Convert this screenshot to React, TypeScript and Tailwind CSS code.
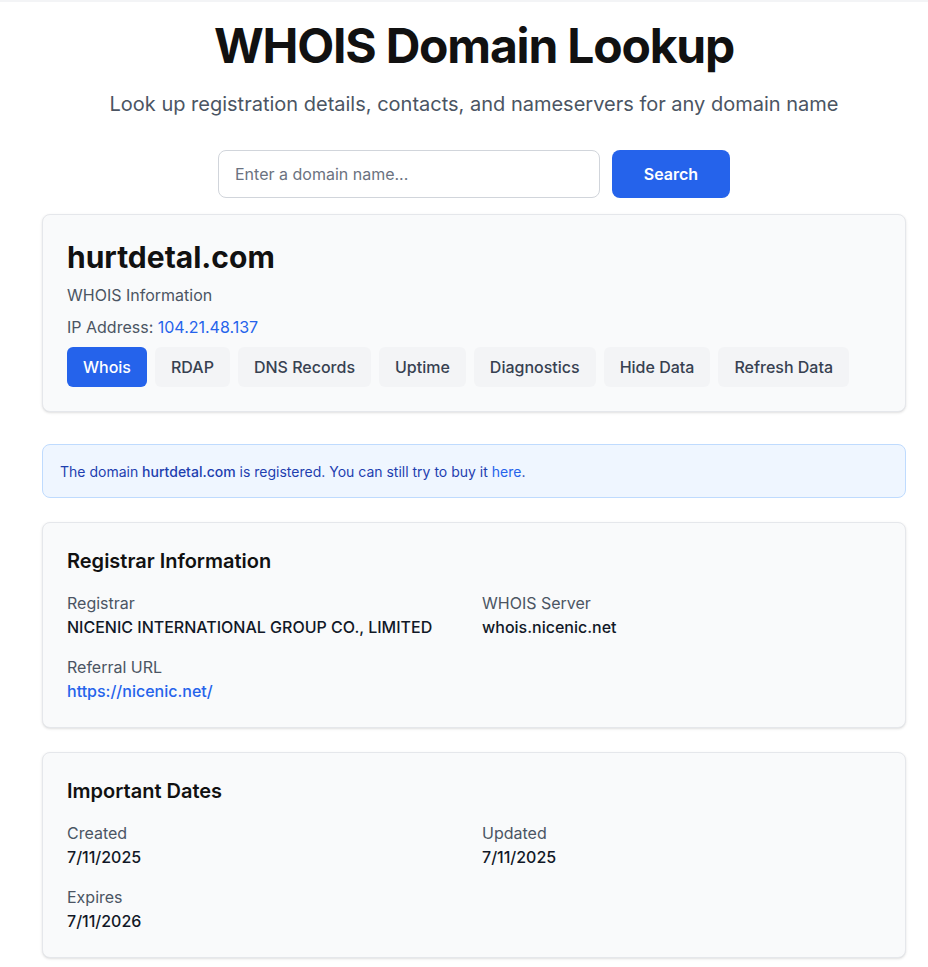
import { useState } from "react";

const TABS = ["Whois", "RDAP", "DNS Records", "Uptime", "Diagnostics", "Hide Data", "Refresh Data"];

function Field({ label, value, link }: { label: string; value: string; link?: boolean }) {
  return (
    <div>
      <div className="text-base leading-6 text-[#4b5563]">{label}</div>
      <div className={`text-base font-medium leading-6 ${link ? "text-[#2563eb]" : "text-[#111827]"}`}>{value}</div>
    </div>
  );
}

export default function App() {
  const [query, setQuery] = useState("");
  const [tab, setTab] = useState("Whois");

  return (
    <div className="min-h-screen bg-white text-[#111827]" style={{ fontFamily: "Inter, 'Noto Sans', sans-serif" }}>
      <div className="h-[2px] bg-[#f3f4f6]" />
      <div className="pb-2 pl-[42px] pr-[22px] pt-5">
        {/* Header */}
        <header className="text-center">
          <h1 className="text-5xl leading-[48px] font-bold tracking-tight text-[#111111]">WHOIS Domain Lookup</h1>
          <p className="mt-5 text-xl leading-7 text-[#4b5563]">
            Look up registration details, contacts, and nameservers for any domain name
          </p>
        </header>

        {/* Search */}
        <form onSubmit={(e) => e.preventDefault()} className="mt-8 flex justify-center gap-3">
          <input
            value={query}
            onChange={(e) => setQuery(e.target.value)}
            placeholder="Enter a domain name..."
            className="h-12 w-[382px] rounded-lg border border-[#d1d5db] bg-white px-4 text-base text-[#111827] outline-none placeholder:text-[#6b7280]"
          />
          <button type="submit" className="h-12 w-[118px] rounded-lg bg-[#2563eb] text-base font-semibold text-white">
            Search
          </button>
        </form>

        {/* Domain card */}
        <section className="mt-4 rounded-lg border border-[#e5e7eb] bg-[#f9fafb] p-6 shadow-sm">
          <h2 className="text-3xl leading-9 font-bold text-[#111111]">hurtdetal.com</h2>
          <p className="mt-2 text-base leading-6 text-[#4b5563]">WHOIS Information</p>
          <p className="mt-2 text-base leading-6 text-[#4b5563]">
            IP Address: <span className="text-[#2563eb]">104.21.48.137</span>
          </p>
          <div className="mt-2 flex flex-wrap gap-2">
            {TABS.map((t) => (
              <button
                key={t}
                onClick={() => setTab(t)}
                className={`h-10 rounded-md px-4 text-base font-medium ${
                  tab === t ? "bg-[#2563eb] text-white" : "bg-[#f3f4f6] text-[#374151]"
                }`}
              >
                {t}
              </button>
            ))}
          </div>
        </section>

        {/* Notice */}
        <div className="mt-8 rounded-lg border border-[#bfdbfe] bg-[#eff6ff] px-[17px] pb-[15px] pt-[17px] text-sm leading-5 text-[#1e40af]">
          The domain <span className="font-medium">hurtdetal.com</span> is registered. You can still try to buy it{" "}
          <a href="#" className="text-[#2563eb]">here</a>.
        </div>

        {/* Registrar */}
        <section className="mt-6 rounded-lg border border-[#e5e7eb] bg-[#f9fafb] p-6 shadow-sm">
          <h3 className="text-xl leading-7 font-semibold text-[#111111]">Registrar Information</h3>
          <div className="mt-4 grid grid-cols-2 gap-x-4 gap-y-4">
            <Field label="Registrar" value="NICENIC INTERNATIONAL GROUP CO., LIMITED" />
            <Field label="WHOIS Server" value="whois.nicenic.net" />
            <Field label="Referral URL" value="https://nicenic.net/" link />
          </div>
        </section>

        {/* Dates */}
        <section className="mt-6 rounded-lg border border-[#e5e7eb] bg-[#f9fafb] p-6 shadow-sm">
          <h3 className="text-xl leading-7 font-semibold text-[#111111]">Important Dates</h3>
          <div className="mt-4 grid grid-cols-2 gap-x-4 gap-y-4">
            <Field label="Created" value="7/11/2025" />
            <Field label="Updated" value="7/11/2025" />
            <Field label="Expires" value="7/11/2026" />
          </div>
        </section>
      </div>
    </div>
  );
}
